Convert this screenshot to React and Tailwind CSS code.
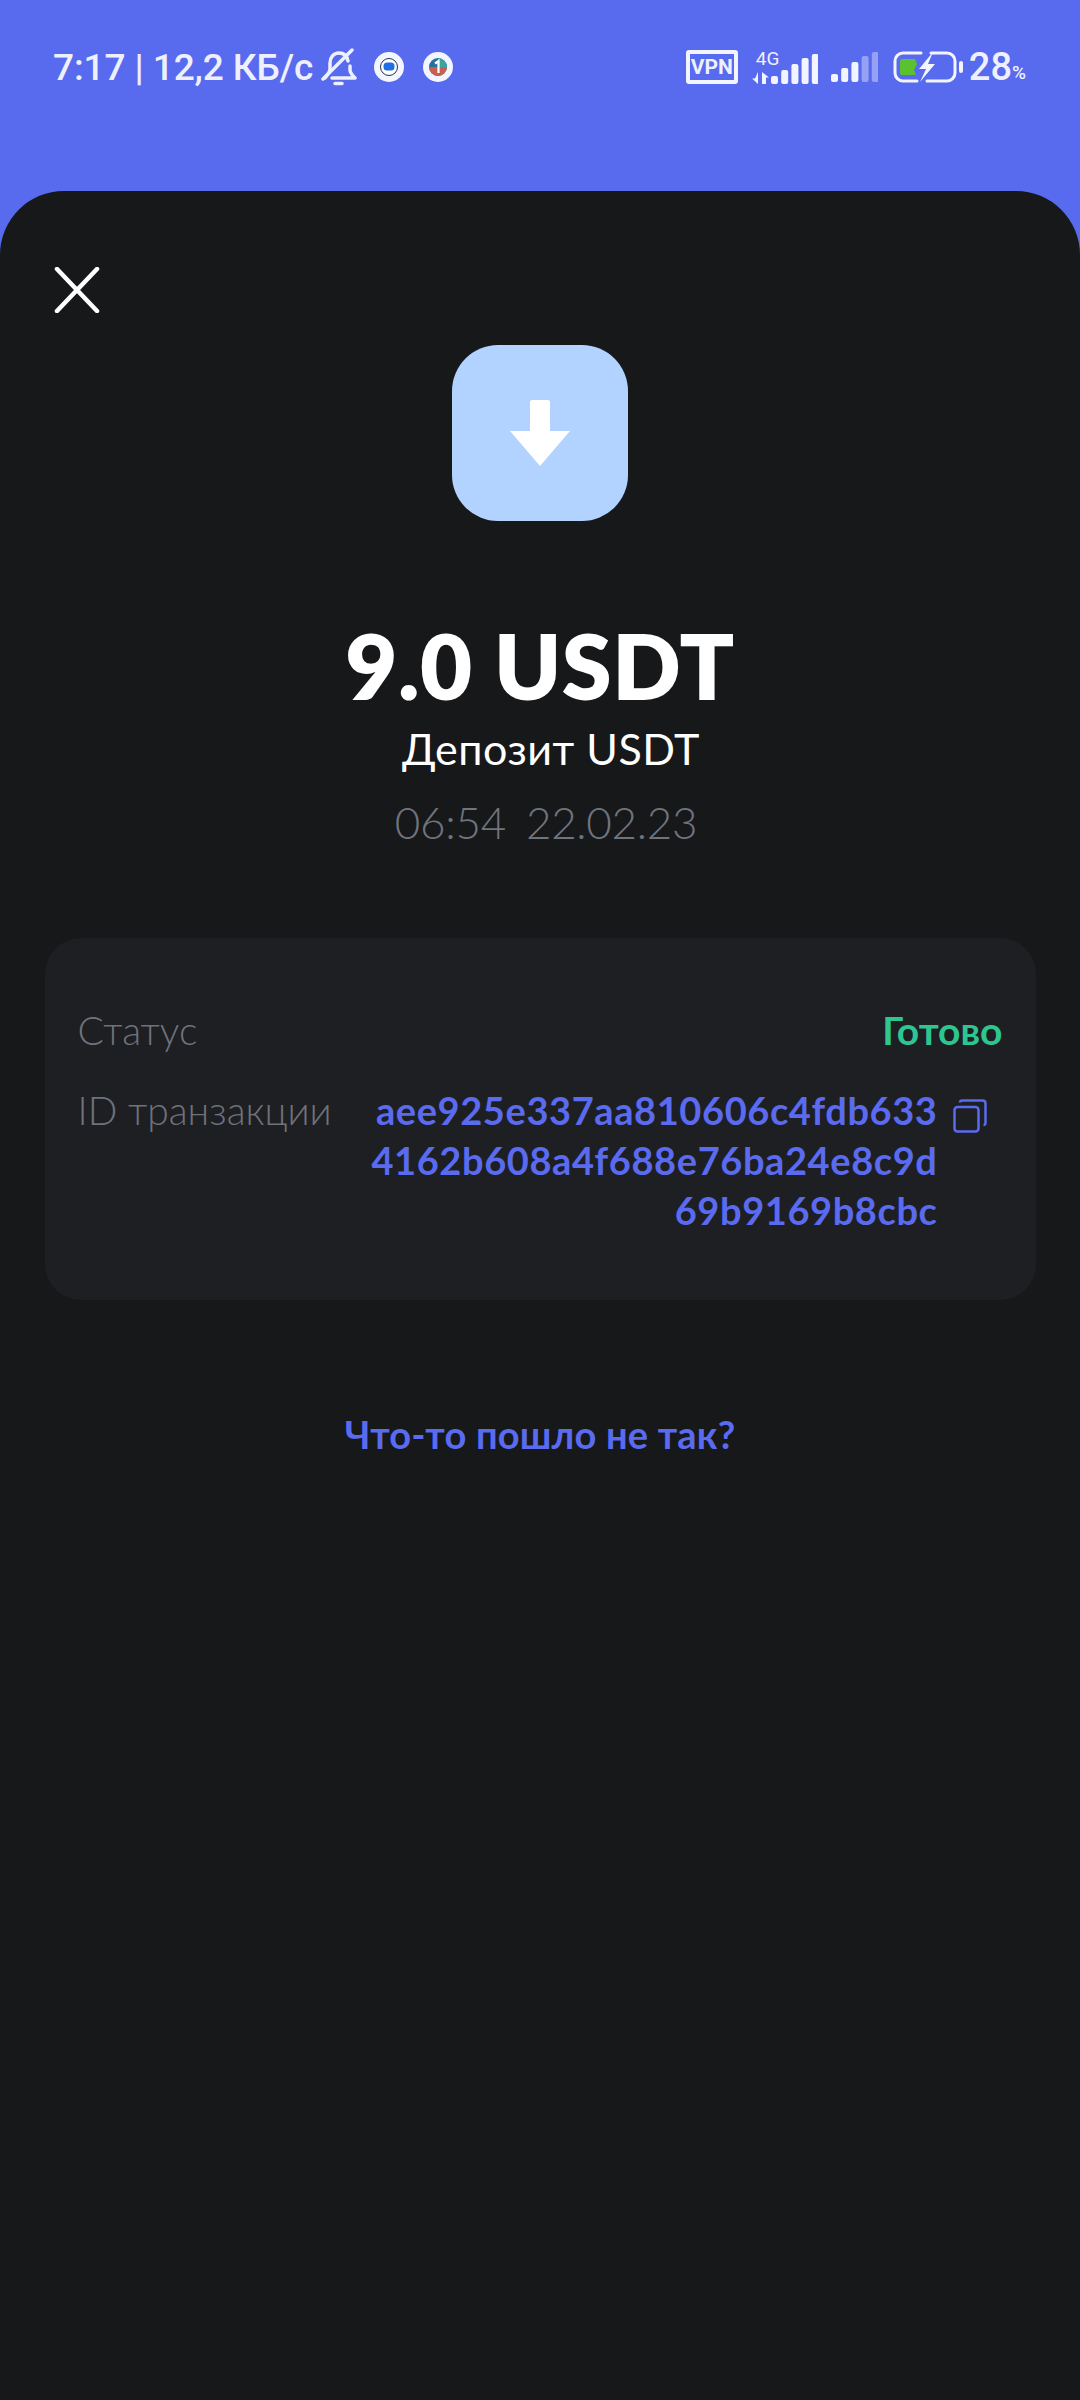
import React from 'react';

const TEXT_FONT = "font-['Lato','Open_Sans',sans-serif]";

function BellOff() {
  return (
    <svg width="36" height="38" viewBox="0 0 36 38" fill="none" stroke="#eef0fd" strokeWidth="3.500" strokeLinecap="round" strokeLinejoin="round">
      <path d="M27 13c-1-5-4.500-8-9-8-5.500 0-9 4.500-9 10v6c0 3-2 5-5 9" />
      <path d="M29 18v4c0 3 2 5 5 8H11" />
      <path d="M14 35.500h7" />
      <path d="M2 31 31 2" />
    </svg>
  );
}

function AppDotMessages() {
  return (
    <svg width="30" height="30" viewBox="0 0 30 30">
      <circle cx="15" cy="15" r="15" fill="#f4f6ff" />
      <circle cx="15" cy="15" r="8.500" fill="#fff" stroke="#29304a" strokeWidth="1" />
      <rect x="9.500" y="10.500" width="11" height="8" rx="3.500" fill="#1f6fe0" />
    </svg>
  );
}

function AppDotBadge() {
  return (
    <svg width="30" height="30" viewBox="0 0 30 30">
      <circle cx="15" cy="15" r="15" fill="#f4f6ff" />
      <circle cx="15" cy="15" r="9" fill="#2a6f9c" />
      <path d="M15 6a9 9 0 0 1 9 9h-9z" fill="#3aa5a0" />
      <path d="M6 15a9 9 0 0 0 9 9 9 9 0 0 0 9-9z" fill="#c8604f" />
      <path d="M12 11.500 15.500 9v12" stroke="#fff" strokeWidth="2.200" fill="none" />
    </svg>
  );
}

function Signal({ dimBars = 0 }) {
  const bars = [8, 14, 20, 26, 30];
  return (
    <svg width="47" height="30" viewBox="0 0 47 30">
      {bars.map((h, i) => (
        <rect
          key={i}
          x={i * 10.200}
          y={30 - h}
          width="7"
          height={h}
          rx="2"
          fill="#f2f4ff"
          opacity={i >= bars.length - dimBars ? 0.4 : 1}
        />
      ))}
    </svg>
  );
}

function Battery() {
  return (
    <svg width="70" height="32" viewBox="0 0 70 32" fill="none">
      <path d="M28 2H10a8 8 0 0 0-8 8v12a8 8 0 0 0 8 8h14" stroke="#f2f4ff" strokeWidth="3" strokeLinecap="round" />
      <path d="M38 2h16a8 8 0 0 1 8 8v12a8 8 0 0 1-8 8H34" stroke="#f2f4ff" strokeWidth="3" strokeLinecap="round" />
      <path d="M9 8h13l2 5-3 6 2 5H9a2 2 0 0 1-2-2V10a2 2 0 0 1 2-2z" fill="#5cc12f" />
      <path d="M40 1 26 18h7l-6 13 15-18h-7z" fill="#f2f4ff" />
      <rect x="66" y="10" width="4" height="12" rx="2" fill="#f2f4ff" />
    </svg>
  );
}

function StatusBar() {
  return (
    <div className="flex h-[191px] items-start justify-between pl-[53px] pr-[54px] pt-[48px] text-[#eef0fd] font-['Roboto',sans-serif]">
      <div className="flex h-[38px] items-center">
        <span className="text-[37px] font-medium leading-none tracking-[-0.1px] whitespace-nowrap">7:17 | 12,2 КБ/с</span>
        <div className="ml-[8px]"><BellOff /></div>
        <div className="ml-[17px]"><AppDotMessages /></div>
        <div className="ml-[19px]"><AppDotBadge /></div>
      </div>
      <div className="flex h-[37px] items-center pt-[1px]">
        <div className="flex h-[34px] w-[52px] items-center justify-center rounded-[3px] border-[4px] border-[#f2f4ff] text-[21px] font-bold leading-none">VPN</div>
        <div className="relative ml-[14px] h-[34px] w-[66px]">
          <span className="absolute left-[4px] top-0 text-[19px] leading-[17px]">4G</span>
          <svg className="absolute bottom-0 left-0" width="18" height="12" viewBox="0 0 18 12" fill="#f2f4ff">
            <path d="M6 0v12L0 6.500h3z" />
            <path d="M10 12V0l7 5.500h-3v6.500z" />
          </svg>
          <div className="absolute bottom-0 right-0"><Signal /></div>
        </div>
        <div className="ml-[13px]"><Signal dimBars={2} /></div>
        <div className="ml-[15px]"><Battery /></div>
        <span className="ml-[6px] text-[38px] font-medium leading-none">28</span>
        <span className="mt-[10px] text-[19px] font-medium leading-none">%</span>
      </div>
    </div>
  );
}

export default function App() {
  return (
    <div className="flex h-[2400px] w-[1080px] flex-col overflow-hidden bg-[#586aee]">
      <StatusBar />

      {/* Sheet */}
      <div className={`flex flex-1 flex-col items-center rounded-t-[64px] bg-[#16181a] ${TEXT_FONT}`}>
        <button className="mt-[76px] self-start pl-[54px]">
          <svg className="block" width="46" height="46" viewBox="0 0 46 46" fill="none" stroke="#fff" strokeWidth="4.500" strokeLinecap="round">
            <path d="M3 2 43 44" />
            <path d="M43 2 3 44" />
          </svg>
        </button>

        <div className="mt-[32px] flex h-[176px] w-[176px] items-center justify-center rounded-[46px] bg-[#b2d2ff]">
          <svg width="60" height="66" viewBox="0 0 60 66" fill="#fff">
            <path d="M20 2a2 2 0 0 1 2-2h16a2 2 0 0 1 2 2v29h20L30 66 0 31h20z" />
          </svg>
        </div>

        <h1 className="mt-[94px] text-[90px] font-extrabold leading-[100px] tracking-[0.5px] text-white">9.0 USDT</h1>
        <p className="ml-[22px] mt-[6px] text-[43px] leading-[56px] tracking-[0.5px] text-white">Депозит USDT</p>
        <p className="ml-[12px] mt-[15px] flex gap-[20px] text-[44px] font-light leading-[60px] tracking-[-0.3px] text-[#70747c]">
          <span>06:54</span>
          <span>22.02.23</span>
        </p>

        {/* Details card */}
        <div className="mt-[86px] w-[991px] rounded-[36px] bg-[#1e1f23] pb-[65px] pl-[33px] pr-[33px] pt-[67px] text-[39px] leading-[50px]">
          <div className="flex items-center justify-between">
            <span className="font-light text-[#6f727a]">Статус</span>
            <span className="font-bold text-[#2dc691]">Готово</span>
          </div>
          <div className="mt-[30px] flex items-start justify-between">
            <span className="font-light whitespace-nowrap text-[#6f727a]">ID транзакции</span>
            <div className="flex items-start">
              <p className="text-right text-[38px] font-bold tracking-[0.6px] whitespace-nowrap text-[#5a6bef]">
                <span className="block">aee925e337aa810606c4fdb633</span>
                <span className="block">4162b608a4f688e76ba24e8c9d</span>
                <span className="block">69b9169b8cbc</span>
              </p>
              <svg className="ml-[15px] mr-[16px] mt-[14px] shrink-0" width="34" height="34" viewBox="0 0 34 34" fill="none" stroke="#5a6bef" strokeWidth="2.500">
                <rect x="1.500" y="8" width="24" height="24.500" rx="3" />
                <path d="M7 3.500C7 2 8 1.500 9.500 1.500h20c2 0 3 1 3 3v19c0 1.500-.5 2.500-2 2.500" />
              </svg>
            </div>
          </div>
        </div>

        <a className="mt-[109px] text-[38px] font-bold leading-[50px] tracking-[0.2px] text-[#5a6bef]">Что-то пошло не так?</a>
      </div>
    </div>
  );
}
